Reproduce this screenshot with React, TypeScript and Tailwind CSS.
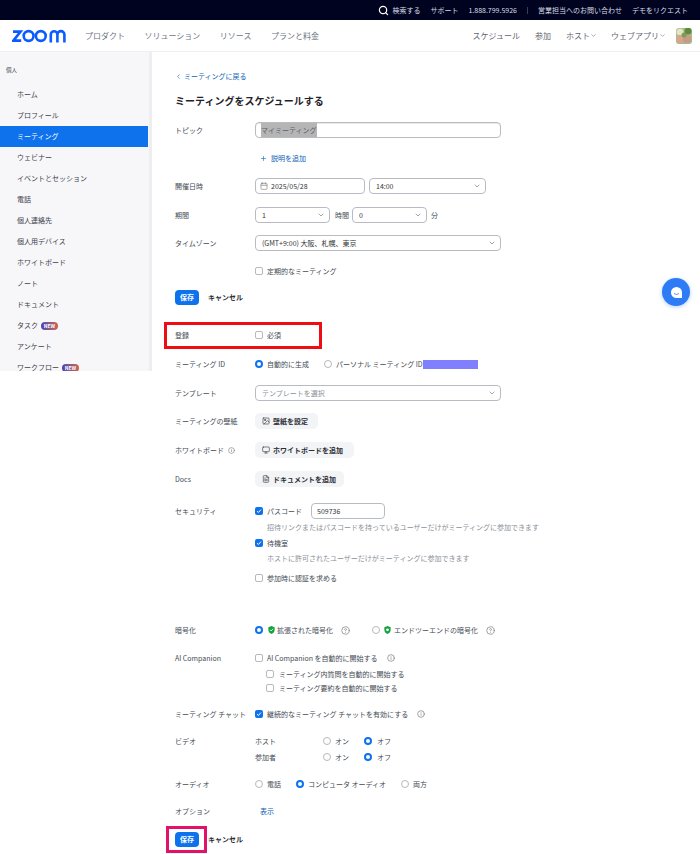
import { ChevronDown, ChevronLeft, Search, Calendar, Image, Monitor, FileText, Info, CircleHelp, Plus } from "lucide-react";
import type { ReactNode } from "react";

const sideItems = ["ホーム", "プロフィール", "ミーティング", "ウェビナー", "イベントとセッション", "電話", "個人連絡先", "個人用デバイス", "ホワイトボード", "ノート", "ドキュメント", "タスク", "アンケート", "ワークフロー"];

function Label({ children }: { children: ReactNode }) {
  return <div className="w-[80px] shrink-0 text-[7px] leading-none text-[#444b53]">{children}</div>;
}

function Check({ on = false }: { on?: boolean }) {
  if (on) {
    return (
      <span className="flex h-[8px] w-[8px] shrink-0 items-center justify-center rounded-[2px] bg-[#0e72ed]">
        <svg width="6" height="6" viewBox="0 0 6 6" fill="none" stroke="#fff" strokeWidth="1">
          <path d="M1 3.2 2.4 4.5 5 1.6" />
        </svg>
      </span>
    );
  }
  return <span className="block h-[8px] w-[8px] shrink-0 rounded-[2px] border border-[#b5b8bd] bg-white" />;
}

function Radio({ on = false }: { on?: boolean }) {
  return on ? (
    <span className="block h-[8px] w-[8px] shrink-0 rounded-full border-[2.5px] border-[#0e72ed] bg-white" />
  ) : (
    <span className="block h-[8px] w-[8px] shrink-0 rounded-full border border-[#b5b8bd] bg-white" />
  );
}

function Shield({ dot = false }: { dot?: boolean }) {
  return (
    <svg width="7" height="8" viewBox="0 0 8 9" className="shrink-0">
      <path d="M4 0 7.6 1.3V4.4C7.6 6.6 6 8.1 4 9 2 8.1.4 6.6.4 4.4V1.3Z" fill="#14a33c" />
      {dot ? <circle cx="4" cy="4.3" r="1.6" fill="#fff" /> : <path d="M2.3 4.3 3.6 5.6 5.8 3.1" fill="none" stroke="#fff" strokeWidth="1" />}
    </svg>
  );
}

function Select({ width, text, muted = false }: { width: string; text: string; muted?: boolean }) {
  return (
    <div className={`flex h-[16px] items-center justify-between rounded-[4px] border border-[#b8bcc2] bg-white pl-[6px] pr-[4px] ${width}`}>
      <span className={`text-[7px] leading-none ${muted ? "text-[#8b9098]" : "text-[#333]"}`}>{text}</span>
      <ChevronDown size={8} strokeWidth={2} color="#777" />
    </div>
  );
}

function Save() {
  return (
    <div className="flex items-center">
      <div className="flex h-[15px] w-[24px] items-center justify-center rounded-[4px] bg-[#0e72ed] text-[7px] font-bold leading-none text-white">保存</div>
      <div className="ml-[9px] text-[7px] font-bold leading-none text-[#2b2f36]">キャンセル</div>
    </div>
  );
}

function GrayButton({ width, icon, text }: { width: string; icon: ReactNode; text: string }) {
  return (
    <div className={`flex h-[16px] items-center gap-[3px] rounded-[5px] bg-[#f3f4f6] pl-[7px] text-[7px] font-bold leading-none text-[#2b2f36] ${width}`}>
      {icon}
      <span>{text}</span>
    </div>
  );
}

export default function App() {
  return (
    <div className="relative h-[854px] w-[700px] overflow-hidden bg-white font-['Noto_Sans_CJK_JP','Noto_Sans',sans-serif]">
      {/* top strip */}
      <div className="flex h-[20px] items-center justify-end gap-[10px] bg-[#00031f] pr-[12px] text-[7px] leading-none text-[#d8dbe6]">
        <div className="flex items-center gap-[3px]">
          <Search size={11} strokeWidth={2.6} color="#fff" />
          <span>検索する</span>
        </div>
        <span>サポート</span>
        <span>1.888.799.5926</span>
        <span className="h-[7px] w-px bg-[#3a3d55]" />
        <span>営業担当へのお問い合わせ</span>
        <span>デモをリクエスト</span>
      </div>

      {/* main nav */}
      <div className="flex h-[32px] items-center border-b border-[#eeeff2] pl-[12px] pr-[8px]">
        <svg width="55" height="14" viewBox="0 0 55 14" fill="none" stroke="#0b5cff" strokeWidth="2.6" className="shrink-0">
          <path d="M1 2.6H8.6L1.4 11.6H9.2" />
          <circle cx="16.6" cy="7" r="4.9" />
          <circle cx="28.8" cy="7" r="4.9" />
          <path d="M37 13.4V5.6A3.3 3.3 0 0 1 43.6 5.6V13.4M43.6 5.6A3.3 3.3 0 0 1 50.6 5.6V13.4" transform="translate(1.8)" />
        </svg>
        <div className="ml-[18px] flex gap-[19.5px] text-[8px] leading-none text-[#6e7680]">
          <span>プロダクト</span>
          <span>ソリューション</span>
          <span>リソース</span>
          <span>プランと料金</span>
        </div>
        <div className="ml-auto flex items-center text-[8px] leading-none text-[#5f666f]">
          <span>スケジュール</span>
          <span className="ml-[15px]">参加</span>
          <span className="ml-[15px]">ホスト</span>
          <ChevronDown size={7} strokeWidth={2} color="#777" />
          <span className="ml-[14px]">ウェブアプリ</span>
          <ChevronDown size={7} strokeWidth={2} color="#777" />
          <svg width="16" height="16" viewBox="0 0 16 16" className="ml-[10px] rounded-[3px]">
            <rect width="16" height="16" fill="#a9b98a" />
            <circle cx="4" cy="4" r="3.5" fill="#dfe6c4" />
            <circle cx="12" cy="3" r="3.5" fill="#5f8a3c" />
            <circle cx="4" cy="11" r="4" fill="#d9a58e" />
            <circle cx="11" cy="11" r="4" fill="#c99a86" />
            <circle cx="8" cy="7" r="2.5" fill="#7d9c55" />
          </svg>
        </div>
      </div>

      <div className="flex">
        {/* sidebar */}
        <div className="relative h-[319px] w-[152px] shrink-0 overflow-hidden bg-[#f7f7fa]">
          <div className="absolute right-0 top-0 h-full w-[3px] bg-[#eeeef1]" />
          <div className="flex h-[32px] items-start pl-[6px] pt-[16px] text-[5.5px] leading-none text-[#444b53]">個人</div>
          {sideItems.map((item) => (
            <div key={item} className={`flex h-[21px] w-[148px] items-center gap-[3px] pl-[17px] text-[7px] leading-none ${item === "ミーティング" ? "bg-[#0e72ed] text-white" : "text-[#3b4149]"}`}>
              <span>{item}</span>
              {(item === "タスク" || item === "ワークフロー") && (
                <span className="flex h-[8px] w-[17px] items-center justify-center rounded-full bg-gradient-to-r from-[#4b3fb8] to-[#d0623e] text-[5px] font-bold leading-none text-white">NEW</span>
              )}
            </div>
          ))}
        </div>

        {/* form */}
        <div className="flex-1 pl-[23px]">
          <div className="mt-[19px] flex h-[10px] items-center gap-[2px] text-[7px] leading-none text-[#0e5fb5]">
            <ChevronLeft size={7} strokeWidth={2} />
            <span>ミーティングに戻る</span>
          </div>
          <div className="mt-[12px] flex h-[16px] items-center text-[10px] font-bold leading-none text-[#1f2329]">ミーティングをスケジュールする</div>

          <div className="mt-[13px] flex h-[16px] items-center">
            <Label>トピック</Label>
            <div className="flex h-[16px] w-[246px] items-center rounded-[4px] border border-[#b8bcc2] pl-[5px] shadow-[inset_0_1px_1px_rgba(0,0,0,0.1)]">
              <span className="flex h-[14px] items-center bg-[#b5b5b5] text-[7px] leading-none text-[#5d6168]">マイミーティング</span>
            </div>
          </div>

          <div className="mt-[14px] flex h-[12px] items-center pl-[85px] text-[7px] leading-none text-[#0e5fb5]">
            <Plus size={7} strokeWidth={2} />
            <span className="ml-[4px]">説明を追加</span>
          </div>

          <div className="mt-[14px] flex h-[16px] items-center">
            <Label>開催日時</Label>
            <div className="flex h-[16px] w-[110px] items-center gap-[3px] rounded-[4px] border border-[#b8bcc2] pl-[4px] text-[7px] leading-none text-[#333]">
              <Calendar size={8} strokeWidth={1.8} color="#777" />
              <span>2025/05/28</span>
            </div>
            <div className="ml-[4px]">
              <Select width="w-[117px]" text="14:00" />
            </div>
          </div>

          <div className="mt-[13px] flex h-[16px] items-center">
            <Label>期間</Label>
            <Select width="w-[75px]" text="1" />
            <span className="ml-[5px] text-[7px] leading-none text-[#444b53]">時間</span>
            <div className="ml-[3px]">
              <Select width="w-[75px]" text="0" />
            </div>
            <span className="ml-[4px] text-[7px] leading-none text-[#444b53]">分</span>
          </div>

          <div className="mt-[12px] flex h-[16px] items-center">
            <Label>タイムゾーン</Label>
            <Select width="w-[246px]" text="(GMT+9:00) 大阪、札幌、東京" />
          </div>

          <div className="mt-[14px] flex h-[12px] items-center gap-[4px] pl-[80px] text-[7px] leading-none text-[#444b53]">
            <Check />
            <span>定期的なミーティング</span>
          </div>

          <div className="mt-[13px]">
            <Save />
          </div>

          <div className="relative mt-[24px] flex h-[12px] items-center">
            <div className="absolute left-[-11px] top-[-7px] h-[27px] w-[158px] border-[3px] border-[#ee0d12]" />
            <Label>登録</Label>
            <Check />
            <span className="ml-[4px] text-[7px] leading-none text-[#444b53]">必須</span>
          </div>

          <div className="mt-[17px] flex h-[12px] items-center text-[7px] leading-none text-[#444b53]">
            <Label>ミーティング ID</Label>
            <Radio on />
            <span className="ml-[4px]">自動的に生成</span>
            <span className="ml-[15px]"><Radio /></span>
            <span className="ml-[4px]">パーソナル ミーティング ID</span>
            <span className="h-[9px] w-[55px] bg-[#8080ff]" />
          </div>

          <div className="mt-[15px] flex h-[16px] items-center">
            <Label>テンプレート</Label>
            <Select width="w-[246px]" text="テンプレートを選択" muted />
          </div>

          <div className="mt-[12px] flex h-[16px] items-center">
            <Label>ミーティングの壁紙</Label>
            <GrayButton width="w-[63px]" icon={<Image size={8} strokeWidth={1.8} />} text="壁紙を設定" />
          </div>

          <div className="mt-[13px] flex h-[16px] items-center">
            <Label>
              <span className="flex items-center gap-[4px]">
                ホワイトボード
                <Info size={7} strokeWidth={2} color="#777" />
              </span>
            </Label>
            <GrayButton width="w-[99px]" icon={<Monitor size={8} strokeWidth={1.8} />} text="ホワイトボードを追加" />
          </div>

          <div className="mt-[13px] flex h-[16px] items-center">
            <Label>Docs</Label>
            <GrayButton width="w-[89px]" icon={<FileText size={8} strokeWidth={1.8} />} text="ドキュメントを追加" />
          </div>

          <div className="mt-[16px] flex h-[16px] items-center text-[7px] leading-none text-[#444b53]">
            <Label>セキュリティ</Label>
            <Check on />
            <span className="ml-[4px]">パスコード</span>
            <div className="ml-[9px] flex h-[16px] w-[74px] items-center rounded-[4px] border border-[#b8bcc2] pl-[5px] text-[#333]">509736</div>
          </div>
          <div className="mt-[2px] flex h-[12px] items-center pl-[92px] text-[7px] leading-none text-[#8b9098]">招待リンクまたはパスコードを持っているユーザーだけがミーティングに参加できます</div>
          <div className="mt-[4px] flex h-[12px] items-center gap-[4px] pl-[80px] text-[7px] leading-none text-[#444b53]">
            <Check on />
            <span>待機室</span>
          </div>
          <div className="mt-[3px] flex h-[12px] items-center pl-[92px] text-[7px] leading-none text-[#8b9098]">ホストに許可されたユーザーだけがミーティングに参加できます</div>
          <div className="mt-[8px] flex h-[12px] items-center gap-[4px] pl-[80px] text-[7px] leading-none text-[#444b53]">
            <Check />
            <span>参加時に認証を求める</span>
          </div>

          <div className="mt-[40px] flex h-[12px] items-center text-[7px] leading-none text-[#444b53]">
            <Label>暗号化</Label>
            <Radio on />
            <span className="ml-[5px]"><Shield /></span>
            <span className="ml-[2px]">拡張された暗号化</span>
            <span className="ml-[8px]"><CircleHelp size={9} strokeWidth={1.8} color="#777" /></span>
            <span className="ml-[22px]"><Radio /></span>
            <span className="ml-[4px]"><Shield dot /></span>
            <span className="ml-[3px]">エンドツーエンドの暗号化</span>
            <span className="ml-[8px]"><CircleHelp size={9} strokeWidth={1.8} color="#777" /></span>
          </div>

          <div className="mt-[16px] flex h-[12px] items-center text-[7px] leading-none text-[#444b53]">
            <Label>AI Companion</Label>
            <Check />
            <span className="ml-[4px]">AI Companion を自動的に開始する</span>
            <span className="ml-[9px]"><Info size={8} strokeWidth={2} color="#777" /></span>
          </div>
          <div className="mt-[4px] flex h-[12px] items-center gap-[5px] pl-[91px] text-[7px] leading-none text-[#444b53]">
            <Check />
            <span>ミーティング内質問を自動的に開始する</span>
          </div>
          <div className="mt-[2px] flex h-[12px] items-center gap-[5px] pl-[91px] text-[7px] leading-none text-[#444b53]">
            <Check />
            <span>ミーティング要約を自動的に開始する</span>
          </div>

          <div className="mt-[14px] flex h-[12px] items-center text-[7px] leading-none text-[#444b53]">
            <Label>ミーティング チャット</Label>
            <Check on />
            <span className="ml-[4px]">継続的なミーティング チャットを有効にする</span>
            <span className="ml-[9px]"><Info size={8} strokeWidth={2} color="#777" /></span>
          </div>

          <div className="mt-[15px] flex h-[12px] items-center text-[7px] leading-none text-[#444b53]">
            <Label>ビデオ</Label>
            <span className="w-[68px]">ホスト</span>
            <Radio />
            <span className="ml-[4px] w-[29px]">オン</span>
            <Radio on />
            <span className="ml-[5px]">オフ</span>
          </div>
          <div className="mt-[4px] flex h-[12px] items-center text-[7px] leading-none text-[#444b53]">
            <Label>{""}</Label>
            <span className="w-[68px]">参加者</span>
            <Radio />
            <span className="ml-[4px] w-[29px]">オン</span>
            <Radio on />
            <span className="ml-[5px]">オフ</span>
          </div>

          <div className="mt-[15px] flex h-[12px] items-center text-[7px] leading-none text-[#444b53]">
            <Label>オーディオ</Label>
            <Radio />
            <span className="ml-[4px]">電話</span>
            <span className="ml-[15px]"><Radio on /></span>
            <span className="ml-[4px]">コンピュータ オーディオ</span>
            <span className="ml-[15px]"><Radio /></span>
            <span className="ml-[4px]">両方</span>
          </div>

          <div className="mt-[15px] flex h-[12px] items-center text-[7px] leading-none">
            <Label>オプション</Label>
            <span className="ml-[5px] text-[#0e5fb5]">表示</span>
          </div>

          <div className="relative mt-[15px]">
            <div className="absolute left-[-9px] top-[-6px] h-[27px] w-[41px] border-[3px] border-[#e2116c]" />
            <Save />
          </div>
        </div>
      </div>

      {/* chat bubble */}
      <div className="absolute left-[662px] top-[278px] flex h-[28px] w-[28px] items-center justify-center rounded-full bg-[#2d7cf6] shadow-[0_1px_4px_rgba(45,124,246,0.35)]">
        <svg width="13" height="13" viewBox="0 0 13 13">
          <path d="M6.5 1A5.5 5.5 0 1 0 6.5 12H12V6.5A5.5 5.5 0 0 0 6.5 1Z" fill="#fff" />
          <path d="M4 7.5Q6.5 9.5 9 7.5" fill="none" stroke="#2d7cf6" strokeWidth="0.8" />
        </svg>
      </div>
    </div>
  );
}
